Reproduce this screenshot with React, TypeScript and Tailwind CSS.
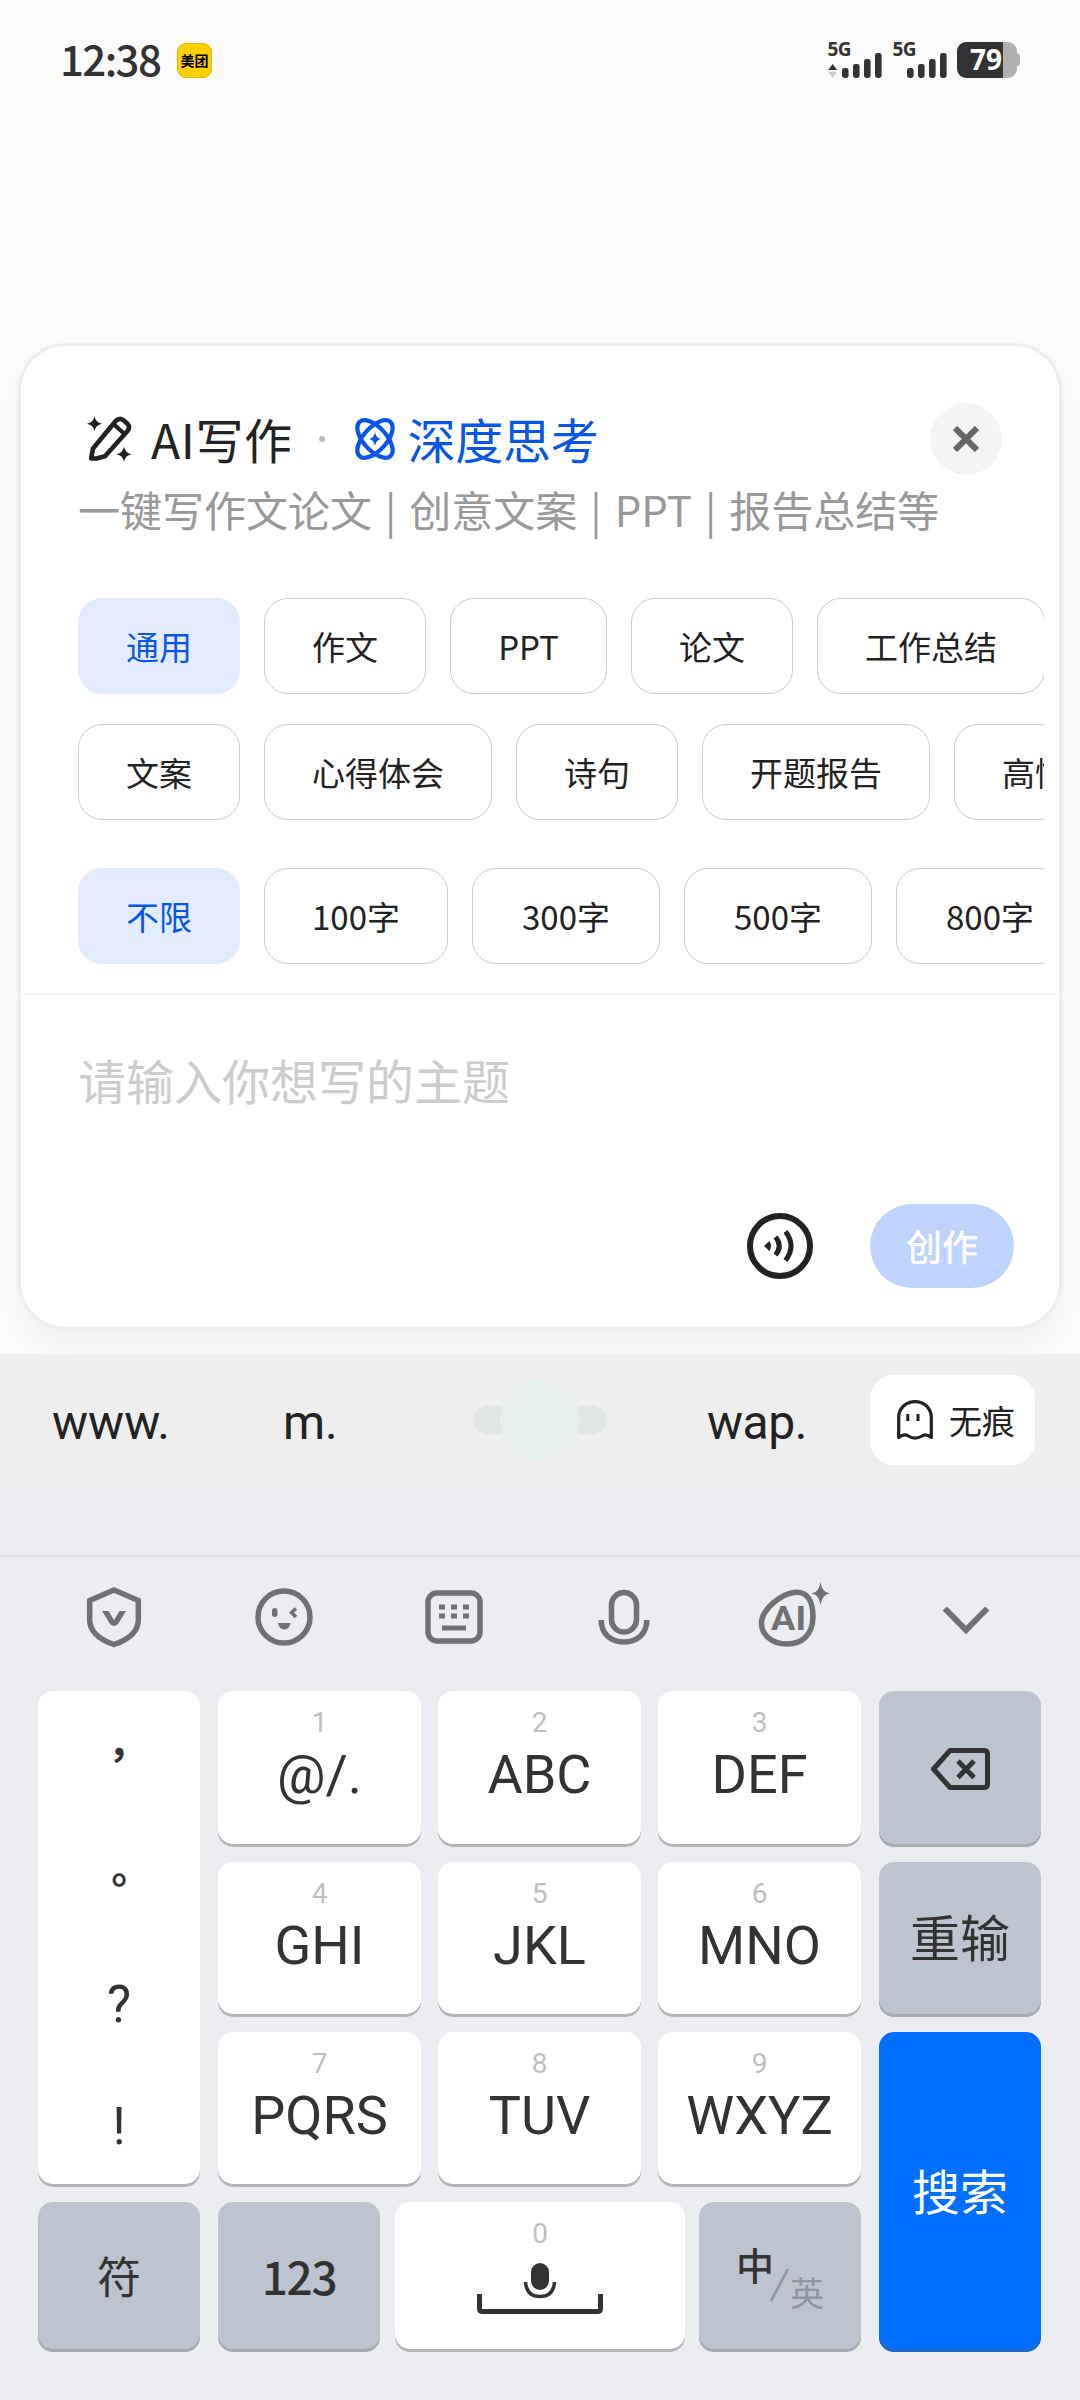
import React, { useState } from "react";

type Chip = { label: string; width: string };

const topicRows: Chip[][] = [
  [
    { label: "通用", width: "w-[162px]" },
    { label: "作文", width: "w-[162px]" },
    { label: "PPT", width: "w-[157px]" },
    { label: "论文", width: "w-[162px]" },
    { label: "工作总结", width: "w-[228px]" },
  ],
  [
    { label: "文案", width: "w-[162px]" },
    { label: "心得体会", width: "w-[228px]" },
    { label: "诗句", width: "w-[162px]" },
    { label: "开题报告", width: "w-[228px]" },
    { label: "高情商回复", width: "w-[261px]" },
  ],
];

const lengths: Chip[] = [
  { label: "不限", width: "w-[162px]" },
  { label: "100字", width: "w-[184px]" },
  { label: "300字", width: "w-[188px]" },
  { label: "500字", width: "w-[188px]" },
  { label: "800字", width: "w-[188px]" },
];

const letterKeys = ["@/.", "ABC", "DEF", "GHI", "JKL", "MNO", "PQRS", "TUV", "WXYZ"];

function SignalBars({ arrows }: { arrows?: boolean }) {
  return (
    <svg className="overflow-visible" width="54" height="36" viewBox="0 0 54 36" fill="#333">
      <text x="-0.5" y="14" fontSize="19" fontWeight="700" fontFamily="Noto Sans, sans-serif" textLength="24">5G</text>
      {arrows && (
        <>
          <path d="M4.7 22 9.2 28H.2z" />
          <path d="M4.7 36 9.2 29.8H.2z" fill="#ccc" />
        </>
      )}
      <rect x="14" y="26" width="6.6" height="10" rx="2.4" />
      <rect x="25" y="22" width="6.6" height="14" rx="2.4" />
      <rect x="36" y="17" width="6.6" height="19" rx="2.4" />
      <rect x="47" y="11" width="6.6" height="25" rx="2.4" />
    </svg>
  );
}

function StatusBar() {
  return (
    <div className="flex h-[120px] items-center pl-[60px] pr-[60px]">
      <span className="mb-[5px] w-[117px] text-[42px] font-medium leading-none tracking-[-1.6px] text-[#333]">12:38</span>
      <span className="flex h-[35px] w-[35px] items-center justify-center rounded-[9px] border border-[#e2b800] bg-[#ffd000] text-[14px] font-bold leading-none text-black">
        美团
      </span>
      <div className="ml-auto flex items-center">
        <SignalBars arrows />
        <div className="ml-[11px]">
          <SignalBars />
        </div>
        <svg className="ml-[10px] overflow-visible" width="63" height="36" viewBox="0 0 63 36">
          <path d="M46 0h5a9 9 0 0 1 9 9v2q3 1 3 3v7q0 3-3 3v3a9 9 0 0 1-9 9h-5z" fill="#b0b0b0" />
          <path d="M46 0H9a9 9 0 0 0-9 9v18a9 9 0 0 0 9 9h37z" fill="#333" />
          <text x="13" y="28" fontSize="28" fontWeight="700" fill="#fff" fontFamily="Noto Sans, sans-serif" textLength="32">79</text>
        </svg>
      </div>
    </div>
  );
}

function PencilIcon() {
  return (
    <svg width="46" height="46" viewBox="0 0 46 46" fill="none">
      <path
        d="M4.2 42.5 6 32.5 28.5 5.2Q32.5 1 36.5 4.2L40.5 7.8Q43.5 11 40.5 15L18 40.2 9.5 42.5z"
        stroke="#222"
        strokeWidth="4.6"
        strokeLinejoin="round"
      />
      <path d="M27 8.5 37.5 18" stroke="#222" strokeWidth="4" />
      <path d="M7.5 0Q8.5 6.5 15 7.8 8.5 9 7.5 15.5 6.5 9 0 7.8 6.5 6.5 7.5 0z" fill="#222" />
      <path d="M37 30.5Q38 37 44.5 38.2 38 39.4 37 46 36 39.4 29.5 38.2 36 37 37 30.5z" fill="#222" />
    </svg>
  );
}

function AtomIcon() {
  return (
    <svg width="42" height="42" viewBox="0 0 42 42" fill="none">
      <ellipse cx="21" cy="21" rx="23" ry="11.5" transform="rotate(48 21 21)" stroke="#0756e8" strokeWidth="4.2" />
      <ellipse cx="21" cy="21" rx="23" ry="11.5" transform="rotate(-48 21 21)" stroke="#0756e8" strokeWidth="4.2" />
      <path d="M21 14Q22 20 27 21 22 22 21 28 20 22 15 21 20 20 21 14z" fill="#0756e8" />
    </svg>
  );
}

function VoiceIcon() {
  return (
    <svg width="66" height="66" viewBox="0 0 66 66" fill="none" stroke="#222">
      <circle cx="33" cy="33" r="30" strokeWidth="6" />
      <path d="M17 33 22.5 28Q25.5 33 22.5 38z" fill="#222" stroke="none" />
      <path d="M28.5 24Q36 33 28.5 42M38.5 18.5Q49.5 33 38.5 47.5" strokeWidth="5" />
    </svg>
  );
}

function GhostIcon() {
  return (
    <svg width="36" height="40" viewBox="0 0 36 40" fill="none" stroke="#222">
      <path
        d="M1.7 37.5V17.5C1.7 8 9 1.6 18 1.6S34.3 8 34.3 17.5V37.5C30 34 27.5 34 25 36 20 39 16 39 11.5 36 8.5 34 6 34 1.7 37.5z"
        strokeWidth="3.2"
        strokeLinejoin="round"
      />
      <path d="M10.8 14v7M21 14v7" strokeWidth="3" />
    </svg>
  );
}

function ChipRow({ chips, active, onPick }: { chips: Chip[]; active: string; onPick: (label: string) => void }) {
  return (
    <div className="flex gap-6 overflow-hidden">
      {chips.map(({ label, width }) => (
        <button
          key={label}
          onClick={() => onPick(label)}
          className={`h-24 shrink-0 whitespace-nowrap rounded-3xl pt-px text-[33px] leading-none ${width} ${
            active === label ? "bg-[#e3ecff] text-[#0756e8]" : "border border-[#ccc] text-[#222]"
          }`}
        >
          {label}
        </button>
      ))}
    </div>
  );
}

function WritingCard() {
  const [topic, setTopic] = useState("通用");
  const [length, setLength] = useState("不限");

  return (
    <div className="mx-[18px] flex h-[987px] flex-col rounded-[48px] border-[3px] border-[#eee] bg-white shadow-[0_18px_36px_-6px_rgba(0,0,0,0.06)]">
      <div className="mt-[57px] flex h-[72px] items-center pl-[66px] pr-[57px]">
        <PencilIcon />
        <span className="mb-[2px] ml-[18px] text-[48px] leading-none tracking-[0.6px] text-[#222]">AI写作</span>
        <span className="ml-[26px] h-1.5 w-1.5 rounded-full bg-[#bbb]" />
        <div className="ml-[29px]">
          <AtomIcon />
        </div>
        <span className="mb-[2px] ml-3 text-[48px] leading-none tracking-[-0.3px] text-[#0756e8]">深度思考</span>
        <button className="ml-auto flex h-[72px] w-[72px] items-center justify-center rounded-full bg-[#f4f4f4]">
          <svg width="26" height="26" viewBox="0 0 26 26" stroke="#666" strokeWidth="6">
            <path d="M2 2 24 24M24 2 2 24" />
          </svg>
        </button>
      </div>
      <p className="ml-[57px] mt-[9px] h-[50px] whitespace-nowrap text-[42px] leading-[50px] text-[#999] [word-spacing:3.6px]">
        一键写作文论文 | 创意文案 | PPT | 报告总结等
      </p>

      <div className="ml-[57px] mr-[15px] mt-16">
        <div className="flex flex-col gap-[30px]">
          {topicRows.map((row, i) => (
            <ChipRow key={i} chips={row} active={topic} onPick={setTopic} />
          ))}
        </div>
        <div className="mt-12">
          <ChipRow chips={lengths} active={length} onPick={setLength} />
        </div>
      </div>

      <div className="mt-[30px] flex flex-1 flex-col border-t border-[#eee] pl-[57px] pr-[45px] pt-[57px]">
        <span className="text-[48px] leading-[54px] text-[#ccc]">请输入你想写的主题</span>
        <div className="mb-[39px] mt-auto flex items-center justify-end gap-[57px]">
          <VoiceIcon />
          <button className="h-[84px] w-36 rounded-full bg-[#bfd3ff] pb-[3px] text-[36px] font-medium leading-none text-white">
            创作
          </button>
        </div>
      </div>
    </div>
  );
}

function SuggestionBar() {
  return (
    <div className="flex h-[132px] items-center bg-[#eee] font-[Roboto,'Noto_Sans_CJK_SC',sans-serif] text-[48px] leading-none text-[#222]">
      <span className="ml-[52px] mt-[5px] w-[231px]">www.</span>
      <span className="mt-[5px] w-[191px]">m.</span>
      <svg width="132" height="80" viewBox="0 0 132 80">
        <rect y="25" width="132" height="30" rx="15" fill="#e0e6e6" />
        <circle cx="66" cy="40" r="40" fill="#e8efef" />
      </svg>
      <span className="ml-[101px] mt-[5px] w-[163px] tracking-[-0.5px]">wap.</span>
      <button className="flex h-[90px] w-[165px] items-center rounded-3xl bg-white pl-[27px] font-['Noto_Sans_CJK_SC',sans-serif] text-[33px]">
        <GhostIcon />
        <span className="ml-4">无痕</span>
      </button>
    </div>
  );
}

function Toolbar() {
  return (
    <div className="h-[136px] border-t-2 border-[#dfe1e5]">
      <svg width="1080" height="133" viewBox="0 1557 1080 133" fill="none" stroke="#707173" strokeWidth="5.5">
        {/* shield */}
        <path d="M114 1590 138.3 1600.5V1620C138.3 1633 127 1640 114 1644.5 101 1640 89.7 1633 89.7 1620V1600.5z" />
        <path d="M102 1611h6.5l5.5 9 5.5-9h6.5l-8.2 13.2q-3.8 3.6-7.6 0z" fill="#707173" stroke="none" />
        {/* winking face */}
        <circle cx="284" cy="1617" r="26" />
        <rect x="272" y="1608" width="5.5" height="9" rx="2.7" fill="#707173" stroke="none" />
        <path d="M296 1608.5 291.5 1612.5 296 1617" strokeWidth="3.5" />
        <path d="M278 1623h12.5q-1.2 6.5-6.2 6.5t-6.3-6.5z" fill="#707173" stroke="none" />
        {/* keyboard */}
        <rect x="428" y="1593" width="52" height="48" rx="9" />
        <path d="M439 1607h30M439 1616h30" strokeWidth="5" strokeDasharray="6 6" />
        <path d="M442 1628h24" strokeWidth="5" />
        {/* mic */}
        <rect x="611.5" y="1592.5" width="25" height="39.5" rx="12.5" />
        <path d="M601.2 1620C601.2 1634 611 1642 624 1642S646.8 1634 646.8 1620" />
        {/* AI assistant */}
        <path d="M794 1592.5C807 1591 813 1600 813 1617 812.5 1635 802 1644 787 1644 771 1644 761 1634 761.5 1622 762.5 1609 781 1594 794 1592.5z" />
        <path d="M820.5 1582Q822 1592.5 830 1593.5 822 1594.5 820.5 1605 819 1594.5 811.5 1593.5 819 1592.5 820.5 1582z" fill="#707173" stroke="none" />
        <text x="771" y="1630" fontSize="34" fontWeight="700" fill="#707173" stroke="none" fontFamily="Roboto, sans-serif" textLength="35" lengthAdjust="spacingAndGlyphs">AI</text>
        {/* collapse */}
        <path d="M944.8 1608.5 966 1630 987.2 1608.5" strokeWidth="6" />
      </svg>
    </div>
  );
}

type KeyProps = { className?: string; children: React.ReactNode };

function WhiteKey({ className = "", children }: KeyProps) {
  return (
    <button className={`rounded-[15px] bg-white font-[Roboto,'Noto_Sans_CJK_SC',sans-serif] text-[#333] shadow-[inset_0_-3px_0_#b2b4b6] ${className}`}>
      {children}
    </button>
  );
}

function GrayKey({ className = "", children }: KeyProps) {
  return (
    <button
      className={`flex items-center justify-center rounded-[15px] bg-[#bdc4d0] leading-none text-[#333] shadow-[inset_0_-3px_0_#a5a9b0] ${className}`}
    >
      {children}
    </button>
  );
}

function Keyboard() {
  return (
    <div className="flex gap-[18px] pl-[38px]">
      <div className="flex w-[823px] flex-col gap-[15px]">
        <div className="flex h-[496px] gap-[18px]">
          <WhiteKey className="flex w-[162px] flex-col leading-none">
            {/* the TC face centres full-width punctuation in its box */}
            {["，", "。"].map((mark) => (
              <span key={mark} lang="zh-TW" className="flex w-full flex-1 items-center justify-center pb-1 font-['Noto_Sans_CJK_TC',sans-serif] text-[40px] font-bold">
                {mark}
              </span>
            ))}
            {["?", "!"].map((mark) => (
              <span key={mark} className="flex w-full flex-1 items-center justify-center text-[51px]">
                {mark}
              </span>
            ))}
          </WhiteKey>
          <div className="grid grid-cols-[203px_203px_203px] grid-rows-[156px_155px_155px] gap-x-[17px] gap-y-[15px]">
            {letterKeys.map((letters, i) => (
              <WhiteKey key={letters} className="flex flex-col items-center pt-[18px]">
                <span className="text-[28px] leading-[28px] text-[#bfbfbf]">{i + 1}</span>
                <span className="mt-[10px] text-[54px] leading-[56px]">{letters}</span>
              </WhiteKey>
            ))}
          </div>
        </div>
        <div className="flex h-[150px]">
          <GrayKey className="w-[162px] pb-1 text-[44px]">符</GrayKey>
          <GrayKey className="ml-[18px] w-[162px] pb-[5px] text-[46px] font-medium tracking-[-1.4px]">123</GrayKey>
          <WhiteKey className="ml-[15px] flex w-[290px] flex-col items-center pt-[18px]">
            <span className="text-[28px] leading-[28px] text-[#bfbfbf]">0</span>
            <svg className="mt-[14px]" width="126" height="54" viewBox="0 0 126 54" fill="none" stroke="#333">
              <rect x="54" y="1" width="18" height="27" rx="9" fill="#333" stroke="none" />
              <path d="M48.5 20Q49.5 34.5 63 34.5T77.5 20" strokeWidth="3.5" />
              <path d="M2.5 32v14.5q0 3 3 3h115q3 0 3-3V32" strokeWidth="5" />
            </svg>
          </WhiteKey>
          <GrayKey className="ml-[14px] w-[162px]">
            <span className="mb-[26px] text-[38px] font-medium">中</span>
            <svg width="20" height="34" viewBox="0 0 20 34" className="-ml-1 mt-4" stroke="#8f96a1" strokeWidth="2.5">
              <path d="M1 33 18 1" />
            </svg>
            <span className="mt-[29px] text-[34px] text-[#8f96a1]">英</span>
          </GrayKey>
        </div>
      </div>
      <div className="flex flex-col gap-[15px]">
        <GrayKey className="h-[156px] w-[162px]">
          <svg width="60" height="42" viewBox="0 0 60 42" fill="none" stroke="#333" strokeWidth="5">
            <path d="M20 2.5H54q3.5 0 3.5 3.5V36q0 3.5-3.5 3.5H20L3.5 21z" strokeLinejoin="round" />
            <path d="M28 13 44 29.5M44 13 28 29.5" />
          </svg>
        </GrayKey>
        <GrayKey className="h-[155px] w-[162px] pb-[9px] text-[50px]">重输</GrayKey>
        <button className="h-[320px] w-[162px] rounded-[15px] bg-[#006fff] pb-[7px] text-[48px] leading-none text-white shadow-[inset_0_-3px_0_#1f66c8]">
          搜索
        </button>
      </div>
    </div>
  );
}

export default function App() {
  return (
    <div className="flex h-[2400px] w-[1080px] flex-col overflow-hidden bg-[#fafafa] font-['Noto_Sans_CJK_SC',sans-serif]">
      <StatusBar />
      <div className="mt-[223px]">
        <WritingCard />
      </div>
      <div className="z-10 mt-6 flex flex-1 flex-col bg-[#ebedf1]">
        <SuggestionBar />
        <div className="h-[69px]" />
        <Toolbar />
        <Keyboard />
      </div>
    </div>
  );
}
